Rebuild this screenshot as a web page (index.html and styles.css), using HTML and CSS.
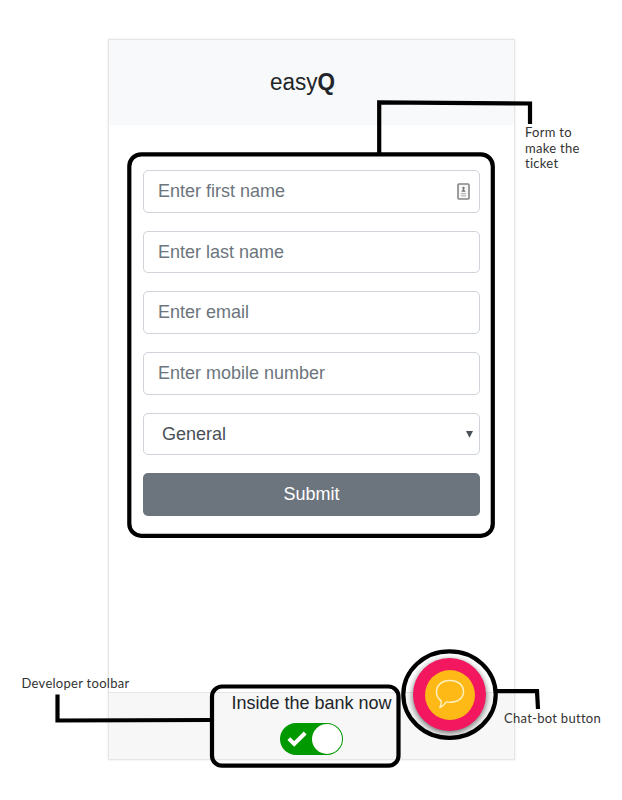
FILE: index.html
```html
<!DOCTYPE html>
<html lang="en">
<head>
<meta charset="utf-8">
<title>easyQ</title>
<link rel="stylesheet" href="styles.css">
</head>
<body>
<div class="phone">
  <header class="header"><h1 class="brand">easy<b>Q</b></h1></header>
  <form class="form">
    <div class="field first"><span>Enter first name</span>
      <svg class="card-icon" width="13" height="17" viewBox="0 0 13 17"><rect x="1" y="1" width="11" height="15" rx="1" fill="#f7f7f7" stroke="#858585" stroke-width="1.6"/><circle cx="6.5" cy="5" r="1.2" fill="#777"/><path d="M4.3 8.8 6.5 5.5l2.2 3.3z" fill="#777"/><path d="M4 10.7h5M4 12.8h5" stroke="#aaa"/></svg>
    </div>
    <div class="field"><span>Enter last name</span></div>
    <div class="field"><span>Enter email</span></div>
    <div class="field"><span>Enter mobile number</span></div>
    <div class="field select"><span>General</span>
      <svg class="caret" width="7" height="7" viewBox="0 0 7 7"><path d="M0 0h7L3.5 6.8z" fill="#495057"/></svg>
    </div>
    <div class="submit"><span>Submit</span></div>
  </form>
  <footer class="toolbar">
    <span class="toolbar-label">Inside the bank now</span>
    <div class="toggle">
      <svg class="check" width="20" height="16" viewBox="0 0 20 16"><path d="M1.8 7.6 7.2 13 18.2 2" fill="none" stroke="#fff" stroke-width="4"/></svg>
      <span class="knob"></span>
    </div>
  </footer>
</div>
<div class="chat">
  <div class="chat-inner">
    <svg width="30" height="31" viewBox="0 0 30 31"><path d="M6.2 21.8C3.4 19.8 1.5 16.5 1.5 12.7 1.5 6 7 1.5 15 1.5S28.5 6 28.5 12.5 23 23.3 15 23.3c-1.4 0-2.6-.1-3.6-.4-1.800 2.600-3.600 4.400-6.600 5.600 1.300-2.300 1.700-4.400 1.400-6.700z" fill="none" stroke="#fff0bd" stroke-width="1.5" stroke-linejoin="round"/></svg>
  </div>
</div>
<svg class="callouts" width="622" height="800" viewBox="0 0 622 800">
  <rect x="129.300" y="154.300" width="363.500" height="381.500" rx="12"/>
  <path d="M379.200 153V102.300L530 103.500V124"/>
  <rect x="212" y="686.500" width="186.500" height="79.200" rx="10"/>
  <path d="M57.500 694.500V720.500L211 720"/>
  <ellipse cx="449.500" cy="694.600" rx="46.200" ry="43.200"/>
  <path d="M496 691.200H537L538 709"/>
</svg>
<p class="note note-form">Form to<br>make the<br>ticket</p>
<p class="note note-toolbar">Developer toolbar</p>
<p class="note note-chat">Chat-bot button</p>
</body>
</html>
```
FILE: styles.css
```css
* { box-sizing: border-box; }
body {
  margin: 0;
  position: relative;
  width: 622px;
  height: 800px;
  overflow: hidden;
  background: #fff;
  font-family: "Liberation Sans", Arial, sans-serif;
  color: #212529;
}
.phone {
  display: flex;
  flex-direction: column;
  width: 407px;
  height: 721px;
  margin: 39px 0 0 108px;
  border: 1px solid #e6e6e6;
  box-shadow: 0 0 2px #e2e2e2;
}
.header {
  display: flex;
  align-items: center;
  justify-content: center;
  height: 85px;
  padding-right: 18px;
  background: #f8f9fa;
}
.brand { margin: 0; font-size: 22.5px; font-weight: 400; line-height: 30px; transform: scaleY(1.05); }
.form {
  display: flex;
  flex-direction: column;
  gap: 18px;
  flex: 1;
  padding: 45px 34px 0;
}
.field, .submit {
  display: flex;
  align-items: center;
  height: 42.7px;
  flex: none;
  border-radius: 5px;
  font-size: 18px;
}
.field span, .submit span, .toolbar-label { transform: scaleY(1.07); }
.field {
  justify-content: space-between;
  padding: 0 10px 0 14px;
  border: 1px solid #ced4da;
  color: #6c757d;
}
.first { padding-right: 9px; }
.select { padding: 0 6px 0 18px; color: #495057; }
.submit { justify-content: center; background: #6c757d; color: #fff; }
.toolbar {
  display: flex;
  flex-direction: column;
  align-items: center;
  height: 67px;
  border-top: 1px solid #e6e6e6;
  background: #f7f7f7;
}
.toolbar-label { font-size: 18px; line-height: 21px; }
.toggle {
  display: flex;
  align-items: center;
  justify-content: space-between;
  width: 63px;
  height: 32px;
  margin-top: 9px;
  padding: 1px 1px 1px 7px;
  border-radius: 16px;
  background: #090;
}
.knob { width: 30px; height: 30px; border-radius: 50%; background: #fff; }
.chat, .chat-inner {
  display: flex;
  align-items: center;
  justify-content: center;
  border-radius: 50%;
}
.chat {
  position: absolute;
  left: 413px;
  top: 658px;
  width: 73px;
  height: 73px;
  background: #f3175f;
  box-shadow: 0 2px 6px rgba(0, 0, 0, .6);
}
.chat-inner { width: 50px; height: 50px; background: #ffb917; }
.callouts { position: absolute; left: 0; top: 0; fill: none; stroke: #000; stroke-width: 4.2; }
.note {
  position: absolute;
  margin: 0;
  font: 400 13px/15.500px Lato, sans-serif;
  font-variant-ligatures: none;
  letter-spacing: .28px;
  color: #333;
  white-space: nowrap;
}
.note-form { left: 525px; top: 125px; }
.note-toolbar { left: 21.500px; top: 676px; }
.note-chat { left: 504px; top: 711px; }
```
